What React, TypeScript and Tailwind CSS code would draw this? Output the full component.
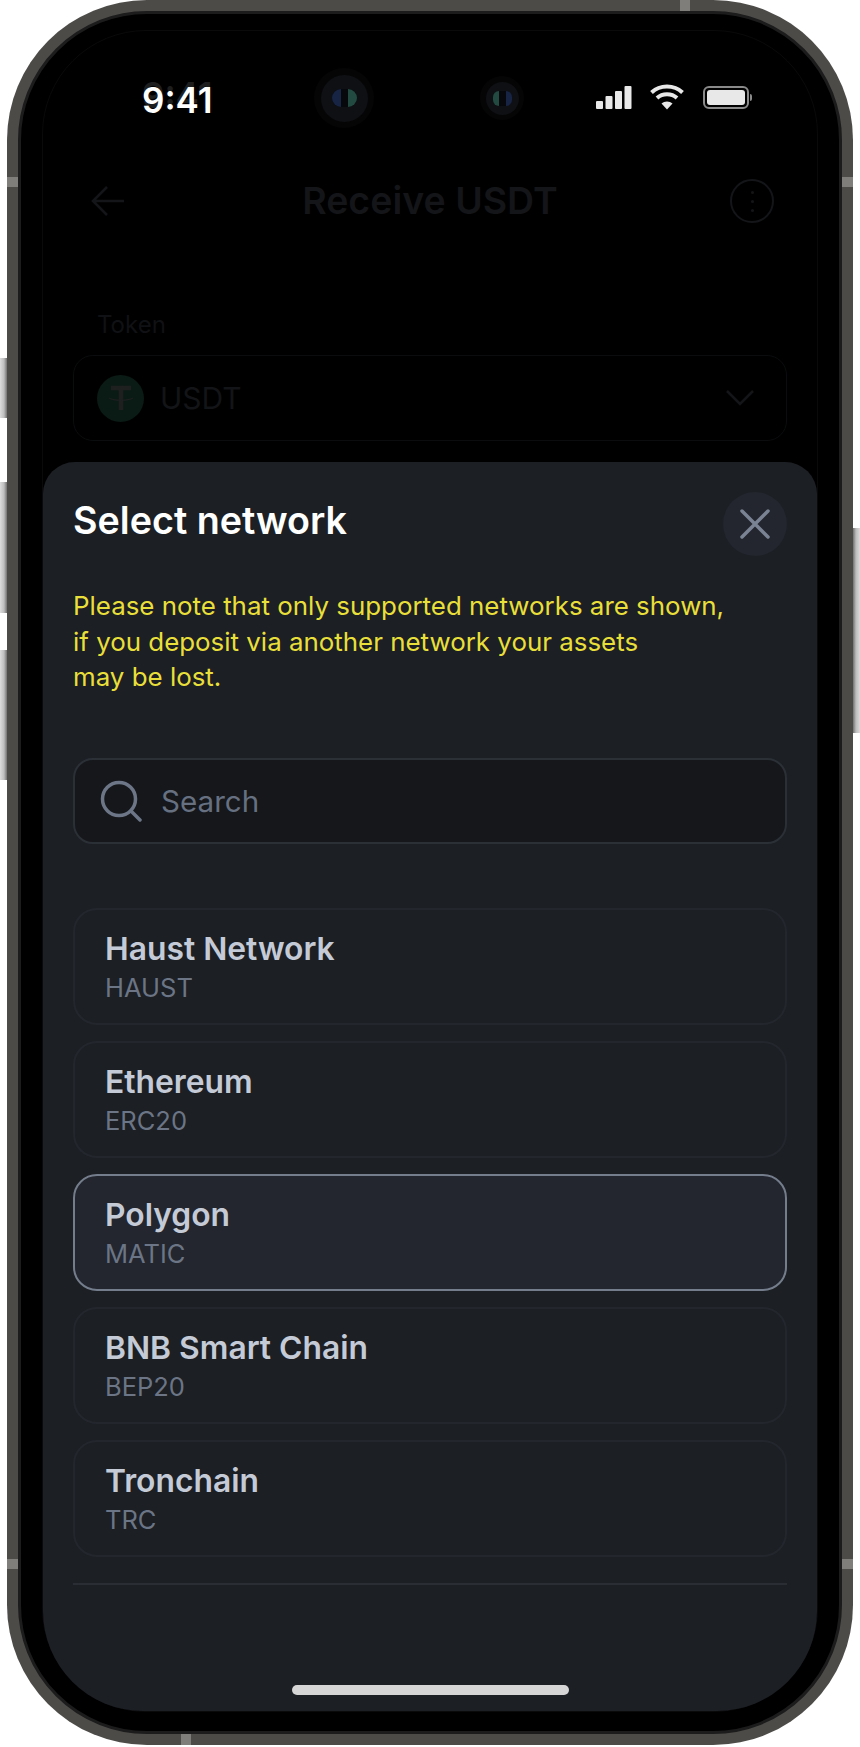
const networks = [
  { name: 'Haust Network', code: 'HAUST' },
  { name: 'Ethereum', code: 'ERC20' },
  { name: 'Polygon', code: 'MATIC', selected: true },
  { name: 'BNB Smart Chain', code: 'BEP20' },
  { name: 'Tronchain', code: 'TRC' },
];

function SideButton({ className }: { className: string }) {
  return <div className={`absolute w-[8px] bg-gradient-to-r from-[#dcdcdc] via-[#bdbdbd] to-[#5a5a5a] ${className}`} />;
}

function Band({ className }: { className: string }) {
  return <div className={`absolute bg-[#807e7b] ${className}`} />;
}

function Camera({ lens, ring, pupil, flip }: { lens: string; ring: string; pupil: string; flip?: boolean }) {
  return (
    <div className={`flex items-center justify-center rounded-full bg-[#050506] ${ring}`}>
      <div className={`flex items-center justify-center rounded-full bg-[#0f1013] ${lens}`}>
        <div className="flex items-center gap-[7px] rounded-full bg-[#06080b]">
          <div className={`rounded-l-full ${pupil} ${flip ? 'bg-[#224a41]' : 'bg-[#172443]'}`} />
          <div className={`rounded-r-full ${pupil} ${flip ? 'bg-[#172443]' : 'bg-[#224a41]'}`} />
        </div>
      </div>
    </div>
  );
}

function StatusIcons() {
  return (
    <div className="flex items-center">
      <svg width="36" height="23" viewBox="0 0 36 23" fill="#e8e8e8">
        <rect x="0" y="15" width="7" height="8" rx="1" />
        <rect x="9.5" y="10" width="7" height="13" rx="1" />
        <rect x="19" y="5" width="7" height="18" rx="1" />
        <rect x="28.5" y="0" width="7" height="23" rx="1" />
      </svg>
      <svg className="ml-[18px]" width="34" height="26" viewBox="0 0 34 26" fill="none" stroke="#e8e8e8" strokeWidth="4">
        <path d="M1.5 8.5C10 0.5 24 0.5 32.5 8.5" />
        <path d="M7 14C12.5 9 21.5 9 27 14" />
        <path d="M17 25.5L11.5 19.5C14.5 16.8 19.5 16.8 22.5 19.5Z" fill="#e8e8e8" stroke="none" />
      </svg>
      <div className="ml-[19px] flex items-center">
        <div className="h-[23px] w-[46px] rounded-[6px] border-2 border-[#8a8a8a] p-[2px]">
          <div className="h-full w-full rounded-[3px] bg-[#e8e8e8]" />
        </div>
        <div className="ml-[1px] h-[7px] w-[2px] rounded-r-full bg-[#8a8a8a]" />
      </div>
    </div>
  );
}

function DimmedPage() {
  return (
    <div className="px-[30px]">
      <div className="relative mt-[47px] flex h-[44px] items-center justify-center">
        <svg className="absolute left-[18px] top-[6px]" width="34" height="32" viewBox="0 0 34 32" fill="none" stroke="#141518" strokeWidth="2.5">
          <path d="M33 16H2M16 2L2 16L16 30" />
        </svg>
        <span className="text-[37.5px] font-semibold leading-[44px] text-[#141518]">Receive USDT</span>
        <div className="absolute right-[13px] top-0 flex h-[44px] w-[44px] flex-col items-center justify-center gap-[6px] rounded-full border-[2.5px] border-[#141518]">
          <div className="h-[3px] w-[3px] rounded-full bg-[#141518]" />
          <div className="h-[3px] w-[3px] rounded-full bg-[#141518]" />
          <div className="h-[3px] w-[3px] rounded-full bg-[#141518]" />
        </div>
      </div>
      <div className="mt-[86px] pl-[24px] text-[24px] leading-[32px] text-[#101114]">Token</div>
      <div className="mt-[14px] flex h-[86px] items-center rounded-[20px] border border-[#0b0c0e] pl-[23px] pr-[32px]">
        <div className="flex h-[47px] w-[47px] items-center justify-center rounded-full bg-[#0a1a15]">
          <svg width="26" height="28" viewBox="0 0 26 28" fill="none" stroke="#1e2020" strokeWidth="4.5">
            <path d="M3 4H23M13 4V26" />
            <path d="M1 14C6 17 20 17 25 14" strokeWidth="1.2" />
          </svg>
        </div>
        <span className="ml-[16px] text-[30px] leading-[36px] text-[#131417]">USDT</span>
        <svg className="ml-auto" width="28" height="16" viewBox="0 0 28 16" fill="none" stroke="#141518" strokeWidth="2.5">
          <path d="M1 1L14 14L27 1" />
        </svg>
      </div>
    </div>
  );
}

function NetworkRow({ name, code, selected }: { name: string; code: string; selected?: boolean }) {
  return (
    <div
      className={`flex h-[117px] flex-col justify-center rounded-[24px] pl-[30px] pt-[4px] ${
        selected ? 'border-2 border-[#747d8c] bg-[#23262e]' : 'border-2 border-[#23272d]'
      }`}
    >
      <div className="text-[31.8px] font-semibold leading-[40px] text-[#c4cbd7]">{name}</div>
      <div className="text-[25.5px] leading-[38px] text-[#6b7585]">{code}</div>
    </div>
  );
}

function NetworkSheet() {
  return (
    <div className="mt-auto flex h-[1249px] flex-col rounded-t-[32px] rounded-b-[100px] bg-[#1c1f24] px-[30px] pt-[30px]">
      <div className="flex h-[64px] items-start justify-between">
        <h1 className="text-[37.7px] font-semibold leading-[56px] text-white">Select network</h1>
        <button className="flex h-[64px] w-[64px] items-center justify-center rounded-full bg-[#23262e]">
          <svg width="30" height="30" viewBox="0 0 30 30" fill="none" stroke="#7a8393" strokeWidth="3.5" strokeLinecap="round">
            <path d="M2 2L28 28M28 2L2 28" />
          </svg>
        </button>
      </div>

      <p className="mt-[32px] text-[25.9px] leading-[35.5px] text-[#e9df3a]">
        Please note that only supported networks are shown,
        <br />
        if you deposit via another network your assets
        <br />
        may be lost.
      </p>

      <div className="mt-[63px] flex h-[86px] items-center rounded-[20px] border-2 border-[#2b3037] bg-[#15171b] pl-[25px]">
        <svg width="42" height="42" viewBox="0 0 42 42" fill="none" stroke="#6c7687" strokeWidth="3.5" strokeLinecap="round">
          <circle cx="19" cy="19" r="16.5" />
          <path d="M31 31L40 40" />
        </svg>
        <span className="ml-[19px] text-[29.6px] leading-[36px] text-[#667081]">Search</span>
      </div>

      <div className="mt-[64px] flex flex-col gap-[16px]">
        {networks.map((n) => (
          <NetworkRow key={n.code} name={n.name} code={n.code} selected={n.selected} />
        ))}
      </div>

      <div className="mt-[26px] h-[2px] bg-[#2a2e34]" />

      <div className="mt-auto mb-[16px] flex justify-center">
        <div className="h-[10px] w-[277px] rounded-full bg-[#d6d6d6]" />
      </div>
    </div>
  );
}

export default function App() {
  return (
    <div className="relative h-[1747px] w-[860px] overflow-hidden bg-white font-['Inter',sans-serif]">
      <SideButton className="left-0 top-[358px] h-[60px]" />
      <SideButton className="left-0 top-[482px] h-[131px]" />
      <SideButton className="left-0 top-[650px] h-[130px]" />
      <div className="absolute right-0 top-[528px] h-[205px] w-[8px] bg-gradient-to-l from-[#dcdcdc] via-[#bdbdbd] to-[#5a5a5a]" />

      <div className="relative ml-[7px] h-[1745px] w-[846px] rounded-[140px] bg-[#4d4b48] p-[11px]">
        <Band className="left-0 top-[177px] h-[10px] w-[11px]" />
        <Band className="right-0 top-[177px] h-[10px] w-[11px]" />
        <Band className="left-0 top-[1559px] h-[10px] w-[11px]" />
        <Band className="right-0 top-[1559px] h-[10px] w-[11px]" />
        <Band className="left-[673px] top-0 h-[11px] w-[10px]" />
        <Band className="bottom-0 left-[174px] h-[11px] w-[10px]" />

        <div className="h-full rounded-[129px] border-[3px] border-[#1c1c1c] bg-black px-[21px] pb-[19px] pt-[16px]">
          <div className="flex h-full flex-col rounded-[104px] border border-[#0a0a0a] bg-black">
            <div className="flex items-center pl-[99px] pt-[37px]">
              {/* dimmed status bar of the page under the sheet peeks out above the live one */}
              <span className="relative w-[72px] text-[35px] font-semibold leading-[44px] text-white">
                <span className="absolute left-0 top-[-5px] text-[#1e1e1e]">9:41</span>
                <span className="relative">9:41</span>
              </span>
              <div className="ml-[100px] mb-[4px]">
                <Camera lens="h-[47px] w-[47px]" ring="h-[60px] w-[60px]" pupil="h-[18px] w-[9px]" />
              </div>
              <div className="ml-[106px] mb-[4px]">
                <Camera lens="h-[33px] w-[33px]" ring="h-[44px] w-[44px]" pupil="h-[15px] w-[6px]" flip />
              </div>
              <div className="ml-[72px] mb-[6px]">
                <StatusIcons />
              </div>
            </div>
            <DimmedPage />
            <NetworkSheet />
          </div>
        </div>
      </div>
    </div>
  );
}
